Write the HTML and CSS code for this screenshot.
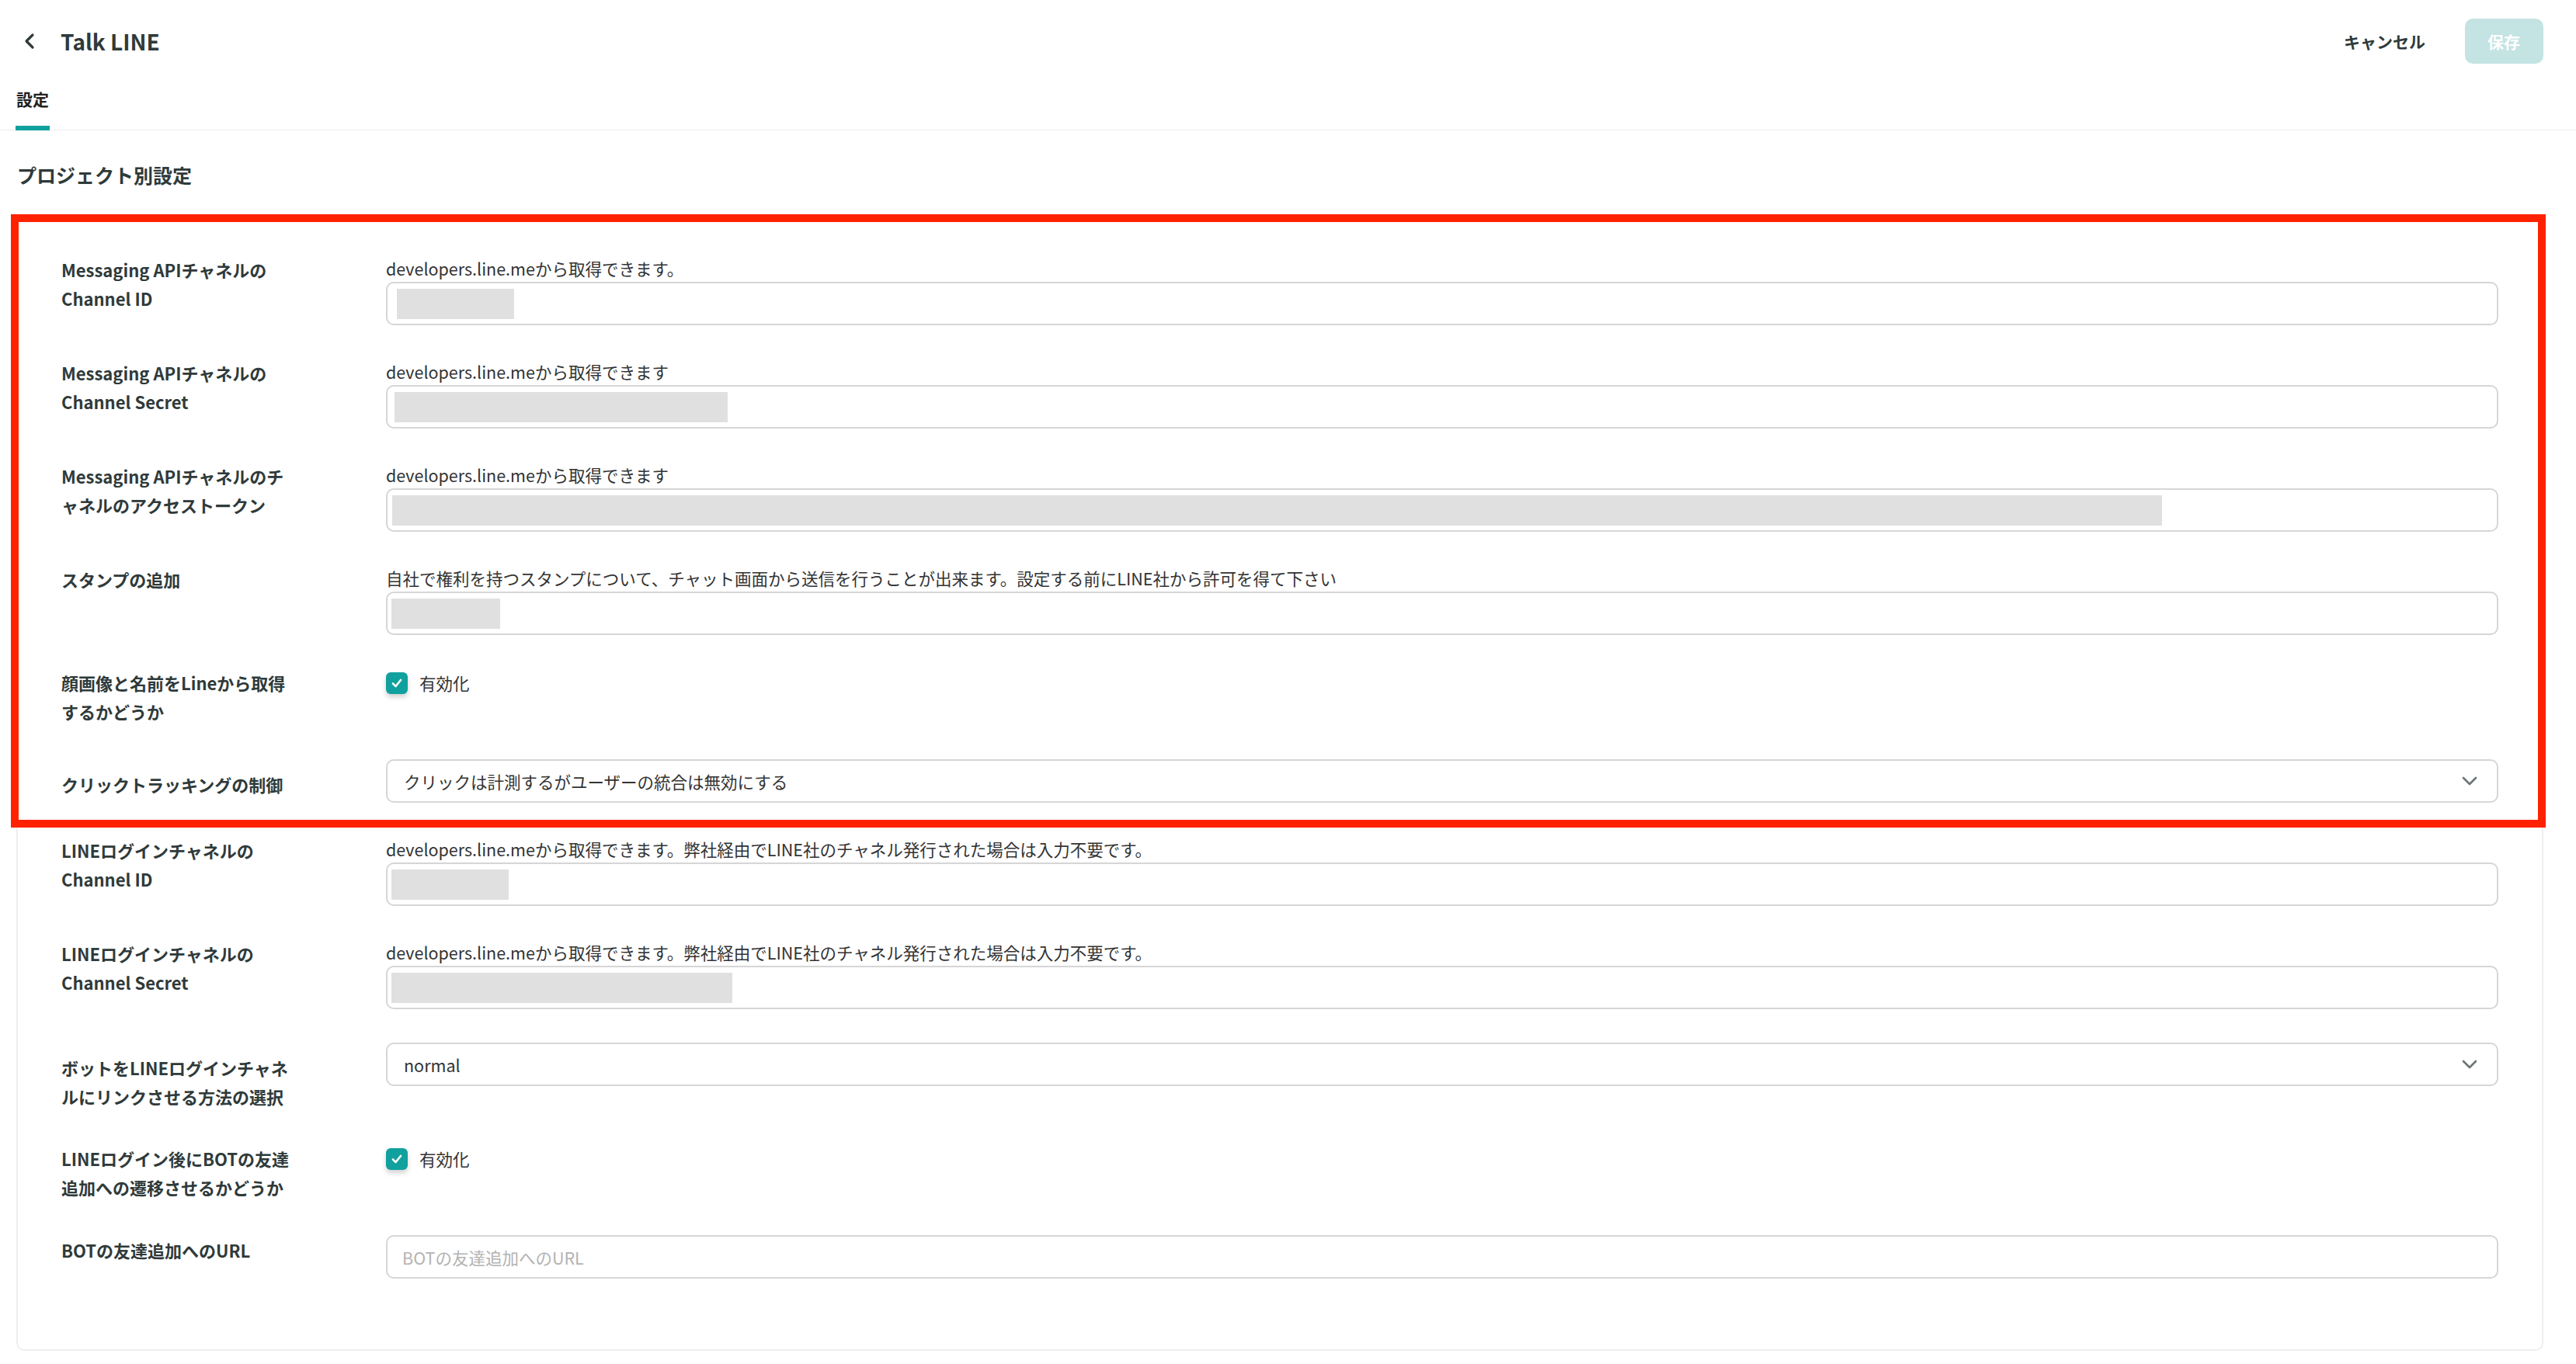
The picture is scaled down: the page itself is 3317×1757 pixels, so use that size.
FILE: index.html
```html
<!DOCTYPE html>
<html lang="ja">

<head>
    <meta charset="UTF-8">
    <title>Talk LINE</title>
    <link rel="stylesheet" href="styles.css">
</head>

<body>
    <header class="topbar">
        <a class="back" href="#">
            <svg width="20" height="22" viewBox="0 0 20 22"><path d="M14 3 L6 11 L14 19" fill="none" stroke="#2f3a3a" stroke-width="3.2" stroke-linecap="round" stroke-linejoin="round"/></svg>
        </a>
        <h1 class="title">Talk LINE</h1>
        <div class="actions">
            <button class="btn-cancel">キャンセル</button>
            <button class="btn-save" disabled>保存</button>
        </div>
    </header>

    <nav class="tabs">
        <a class="tab active" href="#">設定</a>
    </nav>

    <h2 class="section-title">プロジェクト別設定</h2>

    <div class="card">
        <div class="row">
            <div class="label">Messaging APIチャネルの<br>Channel ID</div>
            <div class="field">
                <div class="hint">developers.line.meから取得できます。</div>
                <div class="input"><span class="masked" style="width:151px;margin-left:8px"></span></div>
            </div>
        </div>

        <div class="row">
            <div class="label">Messaging APIチャネルの<br>Channel Secret</div>
            <div class="field">
                <div class="hint">developers.line.meから取得できます</div>
                <div class="input"><span class="masked" style="width:429px;margin-left:5px"></span></div>
            </div>
        </div>

        <div class="row">
            <div class="label">Messaging APIチャネルのチ<br>ャネルのアクセストークン</div>
            <div class="field">
                <div class="hint">developers.line.meから取得できます</div>
                <div class="input"><span class="masked" style="width:2279px;margin-left:2px"></span></div>
            </div>
        </div>

        <div class="row">
            <div class="label">スタンプの追加</div>
            <div class="field">
                <div class="hint">自社で権利を持つスタンプについて、チャット画面から送信を行うことが出来ます。設定する前にLINE社から許可を得て下さい</div>
                <div class="input"><span class="masked" style="width:140px;margin-left:1px"></span></div>
            </div>
        </div>

        <div class="row">
            <div class="label">顔画像と名前をLineから取得<br>するかどうか</div>
            <div class="field">
                <label class="check">
                    <span class="box"><svg width="16" height="14" viewBox="0 0 16 14"><path d="M3 7.5 L6.5 11 L13 3" fill="none" stroke="#fff" stroke-width="2.6" stroke-linecap="round" stroke-linejoin="round"/></svg></span>
                    有効化
                </label>
            </div>
        </div>

        <div class="row">
            <div class="label label-select">クリックトラッキングの制御</div>
            <div class="field">
                <div class="select">
                    <span>クリックは計測するがユーザーの統合は無効にする</span>
                    <svg width="22" height="14" viewBox="0 0 22 14"><path d="M3 3 L11 11 L19 3" fill="none" stroke="#6b7575" stroke-width="2.6" stroke-linecap="round" stroke-linejoin="round"/></svg>
                </div>
            </div>
        </div>

        <div class="row">
            <div class="label">LINEログインチャネルの<br>Channel ID</div>
            <div class="field">
                <div class="hint">developers.line.meから取得できます。弊社経由でLINE社のチャネル発行された場合は入力不要です。</div>
                <div class="input"><span class="masked" style="width:151px;margin-left:1px"></span></div>
            </div>
        </div>

        <div class="row">
            <div class="label">LINEログインチャネルの<br>Channel Secret</div>
            <div class="field">
                <div class="hint">developers.line.meから取得できます。弊社経由でLINE社のチャネル発行された場合は入力不要です。</div>
                <div class="input"><span class="masked" style="width:439px;margin-left:1px"></span></div>
            </div>
        </div>

        <div class="row">
            <div class="label label-select">ボットをLINEログインチャネ<br>ルにリンクさせる方法の選択</div>
            <div class="field">
                <div class="select">
                    <span>normal</span>
                    <svg width="22" height="14" viewBox="0 0 22 14"><path d="M3 3 L11 11 L19 3" fill="none" stroke="#6b7575" stroke-width="2.6" stroke-linecap="round" stroke-linejoin="round"/></svg>
                </div>
            </div>
        </div>

        <div class="row">
            <div class="label">LINEログイン後にBOTの友達<br>追加への遷移させるかどうか</div>
            <div class="field">
                <label class="check">
                    <span class="box"><svg width="16" height="14" viewBox="0 0 16 14"><path d="M3 7.5 L6.5 11 L13 3" fill="none" stroke="#fff" stroke-width="2.6" stroke-linecap="round" stroke-linejoin="round"/></svg></span>
                    有効化
                </label>
            </div>
        </div>

        <div class="row">
            <div class="label label-url">BOTの友達追加へのURL</div>
            <div class="field">
                <div class="input text-input placeholder">BOTの友達追加へのURL</div>
            </div>
        </div>
    </div>

    <!-- 注目枠 -->
    <div class="highlight"></div>
</body>

</html>
```

FILE: styles.css
```css
body {
    margin: 0;
    position: relative;
    font-family: "Noto Sans CJK JP", "Noto Sans", sans-serif;
    color: #2f3a3a;
    background-color: #fff;
}

.topbar {
    display: flex;
    align-items: center;
    height: 106px;
    padding: 0 42px 0 28px;
}

.back {
    display: flex;
    width: 20px;
    height: 22px;
}

.title {
    margin: 0 0 0 30px;
    font-size: 28px;
    font-weight: 700;
    line-height: 40px;
}

.actions {
    display: flex;
    align-items: center;
    gap: 51px;
    margin-left: auto;
}

.btn-cancel {
    padding: 0;
    border: none;
    background: none;
    font-family: inherit;
    font-size: 21px;
    font-weight: 700;
    color: #2f3a3a;
}

.btn-save {
    height: 58px;
    padding: 0 30px 0 29px;
    border: none;
    border-radius: 10px;
    background-color: #c4e3e3;
    font-family: inherit;
    font-size: 21px;
    font-weight: 700;
    color: #fff;
}

.tabs {
    height: 62px;
    box-sizing: border-box;
    border-bottom: 1px solid #ececec;
    padding-left: 20px;
}

.tab {
    display: inline-block;
    padding: 6px 1px 20px;
    font-size: 21px;
    font-weight: 700;
    line-height: 30px;
    color: #222;
    text-decoration: none;
}

.tab.active {
    border-bottom: 6px solid #10a19e;
}

.section-title {
    margin: 40px 0 0 22px;
    font-size: 25px;
    font-weight: 700;
    line-height: 34px;
}

.card {
    display: flex;
    flex-direction: column;
    gap: 43px;
    margin: 39px 42px 0 21px;
    padding: 46px 56px 91px;
    border: 2px solid #efefef;
    border-radius: 10px;
}

.row {
    display: flex;
}

.label {
    flex: 0 0 418px;
    font-size: 22px;
    font-weight: 700;
    line-height: 37px;
    white-space: nowrap;
}

.label-select {
    padding-top: 14px;
}

.label-url {
    padding-top: 1px;
}

.field {
    flex: 1;
    min-width: 0;
}

.hint {
    font-size: 21.5px;
    line-height: 34px;
    color: #333;
    white-space: nowrap;
}

.input,
.select {
    display: flex;
    align-items: center;
    height: 56px;
    box-sizing: border-box;
    border: 2px solid #d6d6d6;
    border-radius: 10px;
    padding: 0 4px;
}

.masked {
    height: 39px;
    background-color: #e0e0e0;
}

.select {
    justify-content: space-between;
    padding: 0 24px 0 21px;
    font-size: 21.5px;
    color: #333;
}

.text-input {
    padding-left: 19px;
    font-size: 21.5px;
}

.placeholder {
    color: #b3b3b3;
}

.check {
    display: flex;
    align-items: center;
    gap: 15px;
    height: 37px;
    font-size: 21.5px;
    color: #333;
}

.check .box {
    display: flex;
    align-items: center;
    justify-content: center;
    width: 28px;
    height: 28px;
    border-radius: 6px;
    background-color: #10a19e;
    box-shadow: 0 4px 6px rgba(0, 0, 0, 0.18);
}

.highlight {
    position: absolute;
    left: 14px;
    top: 276px;
    width: 3264px;
    height: 790px;
    box-sizing: border-box;
    border: 10px solid #ff2200;
}
```
